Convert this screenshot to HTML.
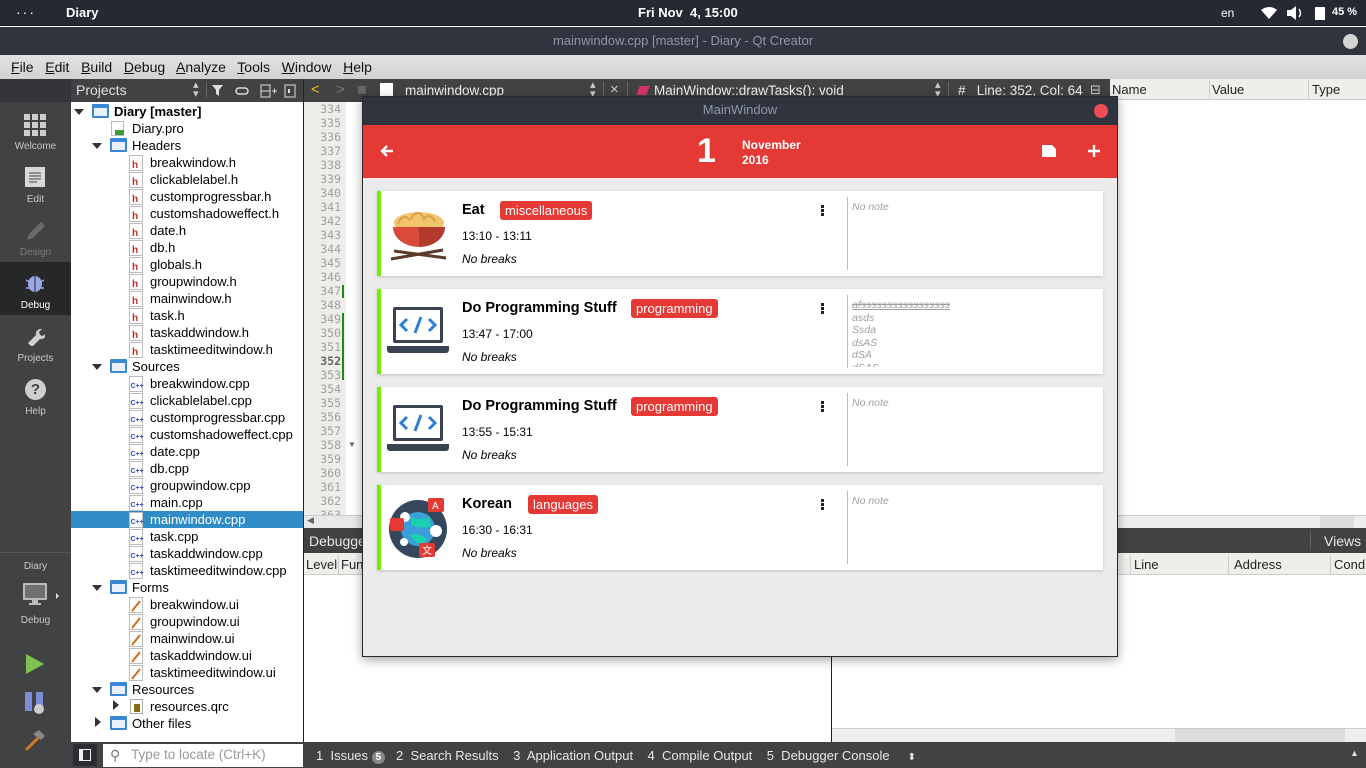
<!DOCTYPE html>
<html><head><meta charset="utf-8"><style>
*{margin:0;padding:0;box-sizing:border-box}
body{width:1366px;height:768px;overflow:hidden;position:relative;background:#fff;font-family:"Liberation Sans","DejaVu Sans",sans-serif;font-size:13px;color:#000}
.a{position:absolute}
.tr{position:absolute;height:17px;line-height:17px;font-size:13px;white-space:nowrap}
.ic{position:absolute;width:13px;height:15px;border:1px solid #aaa;background:#fff;top:1px}
.fold{position:absolute;width:17px;height:14px;top:2px;background:#3a87d6;border-radius:1px}
.fold:after{content:"";position:absolute;left:2px;top:4px;right:2px;bottom:2px;background:#e8f1fb}
.arr{position:absolute;width:0;height:0;border-left:5px solid transparent;border-right:5px solid transparent;border-top:6px solid #333;top:6px}
.arrr{position:absolute;width:0;height:0;border-top:5px solid transparent;border-bottom:5px solid transparent;border-left:6px solid #333;top:4px}
.ln{position:absolute;left:303px;width:38px;text-align:right;font-family:"DejaVu Sans Mono",monospace;font-size:11.5px;color:#a0a0a0;height:14px;line-height:14px}
.mode{position:absolute;left:0;width:71px;text-align:center;color:#c8c8c8;font-size:10px}
.card{position:absolute;left:377px;width:726px;height:85px;background:#fff;border-left:4px solid #70f000;box-shadow:0 1px 3px rgba(0,0,0,.18)}
.card .t{position:absolute;left:81px;top:11px;font-weight:bold;font-size:14.5px}
.card .tag{position:absolute;top:10px;background:#e53935;color:#fff;font-size:13px;padding:1px 5px;border-radius:3px;line-height:17px}
.card .tm{position:absolute;left:81px;top:38px;font-size:12px}
.card .nb{position:absolute;left:81px;top:61px;font-size:12px;font-style:italic}
.card .dots{position:absolute;left:440px;top:14px;width:3px}
.card .dots i{display:block;width:3px;height:2.5px;background:#222;margin-bottom:1.5px}
.card .sep{position:absolute;left:466px;top:6px;width:1px;height:73px;background:#bbb}
.card .note{position:absolute;left:471px;top:10px;font-size:10.5px;font-style:italic;color:#a0a0a0;line-height:12.5px}
.hdr{position:absolute;font-size:13px;color:#222;height:21px;line-height:21px}
</style></head><body>

<div class="a" style="left:0;top:0;width:1366px;height:26px;background:#252932;border-bottom:1px solid #1b1e24"></div>
<div class="a" style="left:16px;top:4px;color:#fff;font-size:14px;letter-spacing:2px">···</div>
<div class="a" style="left:66px;top:5px;color:#fff;font-size:13px;font-weight:bold">Diary</div>
<div class="a" style="left:638px;top:5px;color:#fff;font-size:13px;font-weight:bold">Fri Nov&nbsp; 4, 15:00</div>
<div class="a" style="left:1221px;top:6px;color:#fff;font-size:12px">en</div>
<svg class="a" style="left:1260px;top:6px" width="18" height="14"><path d="M1 4 Q9 -2 17 4 L9 13Z" fill="#fff"/></svg>
<svg class="a" style="left:1286px;top:5px" width="18" height="16"><path d="M1 5h4l5-4v14l-5-4H1z" fill="#fff"/><path d="M13 4q3 4 0 8" stroke="#fff" fill="none" stroke-width="1.4"/></svg>
<div class="a" style="left:1315px;top:7px;width:10px;height:13px;background:#fff"></div>
<div class="a" style="left:1332px;top:6px;color:#fff;font-size:11px;font-weight:bold">45 %</div>

<div class="a" style="left:0;top:27px;width:1366px;height:28px;background:#2f343f"></div>
<div class="a" style="left:0;top:33px;width:1366px;text-align:center;color:#8f97a6;font-size:13px">mainwindow.cpp [master] - Diary - Qt Creator</div>
<div class="a" style="left:1343px;top:34px;width:15px;height:15px;border-radius:50%;background:#d3d3d3"></div>

<div class="a" style="left:0;top:55px;width:1366px;height:24px;background:linear-gradient(#e2e2e2,#d2d2d2)"></div>
<div class="a" style="left:11px;top:59px;font-size:14px;color:#111"><u>F</u>ile&nbsp;&nbsp; <u>E</u>dit&nbsp;&nbsp; <u>B</u>uild&nbsp;&nbsp; <u>D</u>ebug&nbsp;&nbsp; <u>A</u>nalyze&nbsp;&nbsp; <u>T</u>ools&nbsp;&nbsp; <u>W</u>indow&nbsp;&nbsp; <u>H</u>elp</div>

<div class="a" style="left:0;top:79px;width:71px;height:689px;background:#404244"></div>
<div class="a" style="left:0;top:79px;width:71px;height:23px;background:#333538"></div>
<div class="a" style="left:0;top:262px;width:71px;height:53px;background:#262729"></div>
<div class="a" style="left:0;top:552px;width:71px;height:1px;background:#555"></div>
<svg class="a" style="left:24px;top:114px" width="22" height="22" fill="#cfcfcf"><rect x="0" y="0" width="6" height="6"/><rect x="8" y="0" width="6" height="6"/><rect x="16" y="0" width="6" height="6"/><rect x="0" y="8" width="6" height="6"/><rect x="8" y="8" width="6" height="6"/><rect x="16" y="8" width="6" height="6"/><rect x="0" y="16" width="6" height="6"/><rect x="8" y="16" width="6" height="6"/><rect x="16" y="16" width="6" height="6"/></svg>
<div class="mode" style="top:141px">Welcome</div>
<svg class="a" style="left:25px;top:167px" width="20" height="20"><rect width="20" height="20" fill="#d8d8d8"/><path d="M4 6h12M4 9h12M4 12h12M4 15h8" stroke="#444"/></svg>
<div class="mode" style="top:194px">Edit</div>
<svg class="a" style="left:24px;top:221px" width="22" height="22"><path d="M3 19l2-6 12-12 4 4-12 12z" fill="#6a6a6a"/></svg>
<div class="mode" style="top:247px;color:#7a7a7a">Design</div>
<svg class="a" style="left:24px;top:272px" width="22" height="22"><ellipse cx="11" cy="12" rx="7" ry="8" fill="#9aa6e6"/><path d="M2 8l5 3M20 8l-5 3M2 16h5M20 16h-5M11 5v15" stroke="#9aa6e6" stroke-width="1.5"/><path d="M11 4v16" stroke="#262729"/></svg>
<div class="mode" style="top:300px;color:#fff">Debug</div>
<svg class="a" style="left:25px;top:326px" width="20" height="20"><path d="M3 17l8-8a5 5 0 0 1 6-6l-3 3 1 3 3 1 3-3a5 5 0 0 1-6 6l-8 8z" fill="#cfcfcf"/></svg>
<div class="mode" style="top:353px">Projects</div>
<div class="a" style="left:25px;top:379px;width:21px;height:21px;border-radius:50%;background:#cfcfcf;color:#404244;font-weight:bold;font-size:15px;text-align:center;line-height:21px">?</div>
<div class="mode" style="top:406px">Help</div>
<div class="mode" style="top:561px">Diary</div>
<svg class="a" style="left:22px;top:582px" width="40" height="26"><rect x="1" y="1" width="24" height="17" rx="1" fill="#bbb"/><rect x="3" y="3" width="20" height="13" fill="#707070"/><rect x="10" y="18" width="6" height="3" fill="#bbb"/><rect x="7" y="21" width="12" height="2" fill="#bbb"/><path d="M34 11l3 3-3 3z" fill="#ddd"/></svg>
<div class="mode" style="top:615px">Debug</div>
<svg class="a" style="left:25px;top:653px" width="20" height="22"><path d="M1 1l18 10-18 10z" fill="#7fc14e"/></svg>
<svg class="a" style="left:25px;top:692px" width="22" height="24"><rect x="0" y="0" width="7" height="19" fill="#7c8cd6"/><rect x="11" y="0" width="7" height="19" fill="#7c8cd6"/><ellipse cx="14" cy="17" rx="5" ry="5" fill="#ccc"/></svg>
<svg class="a" style="left:23px;top:728px" width="24" height="24"><path d="M3 22l12-12" stroke="#d2781e" stroke-width="3"/><path d="M10 6l6-4 6 6-4 4z" fill="#888"/></svg>

<div class="a" style="left:71px;top:79px;width:232px;height:23px;background:#404244"></div>
<div class="a" style="left:76px;top:82px;color:#e0e0e0;font-size:14px">Projects</div>
<div class="a" style="left:193px;top:81px;color:#ccc;font-size:11px;line-height:9px">▴<br>▾</div>
<div class="a" style="left:206px;top:82px;width:1px;height:16px;background:#666"></div>
<svg class="a" style="left:212px;top:84px" width="90" height="14"><path d="M0 1h11l-4 5v6l-3-2V6z" fill="#ddd"/><rect x="24" y="4" width="12" height="6" rx="3" fill="none" stroke="#ddd" stroke-width="1.5"/><rect x="49" y="1" width="9" height="12" fill="none" stroke="#ddd"/><path d="M49 7h9M60 7h5M62.5 4.5v5" stroke="#ddd"/><rect x="73" y="1" width="10" height="12" fill="none" stroke="#ddd"/><rect x="76" y="5" width="2" height="4" fill="#ddd"/></svg>
<div class="a" style="left:71px;top:102px;width:232px;height:640px;background:#fff"></div>
<div class="a" style="left:303px;top:79px;width:1px;height:663px;background:#222"></div>
<div class="a" style="left:71px;top:511px;width:232px;height:17px;background:#308cc6"></div>

<div class="arr" style="left:74px;top:109px"></div><div class="fold" style="left:92px;top:104px"></div><div class="tr" style="left:114px;top:103px;font-weight:bold">Diary [master]</div>
<div class="ic" style="left:111px;top:121px;border-color:#bbb"></div><div class="a" style="left:115px;top:130px;width:9px;height:5px;background:#3a9a3a"></div><div class="tr" style="left:132px;top:120px">Diary.pro</div>
<div class="arr" style="left:92px;top:143px"></div><div class="fold" style="left:110px;top:138px"></div><div class="tr" style="left:132px;top:137px">Headers</div>
<div class="tr" style="left:150px;top:154px">breakwindow.h</div>
<div class="tr" style="left:150px;top:171px">clickablelabel.h</div>
<div class="tr" style="left:150px;top:188px">customprogressbar.h</div>
<div class="tr" style="left:150px;top:205px">customshadoweffect.h</div>
<div class="tr" style="left:150px;top:222px">date.h</div>
<div class="tr" style="left:150px;top:239px">db.h</div>
<div class="tr" style="left:150px;top:256px">globals.h</div>
<div class="tr" style="left:150px;top:273px">groupwindow.h</div>
<div class="tr" style="left:150px;top:290px">mainwindow.h</div>
<div class="tr" style="left:150px;top:307px">task.h</div>
<div class="tr" style="left:150px;top:324px">taskaddwindow.h</div>
<div class="tr" style="left:150px;top:341px">tasktimeeditwindow.h</div>
<div class="arr" style="left:92px;top:364px"></div><div class="fold" style="left:110px;top:359px"></div><div class="tr" style="left:132px;top:358px">Sources</div>
<div class="tr" style="left:150px;top:375px">breakwindow.cpp</div>
<div class="tr" style="left:150px;top:392px">clickablelabel.cpp</div>
<div class="tr" style="left:150px;top:409px">customprogressbar.cpp</div>
<div class="tr" style="left:150px;top:426px">customshadoweffect.cpp</div>
<div class="tr" style="left:150px;top:443px">date.cpp</div>
<div class="tr" style="left:150px;top:460px">db.cpp</div>
<div class="tr" style="left:150px;top:477px">groupwindow.cpp</div>
<div class="tr" style="left:150px;top:494px">main.cpp</div>
<div class="tr" style="left:150px;top:511px;color:#fff">mainwindow.cpp</div>
<div class="tr" style="left:150px;top:528px">task.cpp</div>
<div class="tr" style="left:150px;top:545px">taskaddwindow.cpp</div>
<div class="tr" style="left:150px;top:562px">tasktimeeditwindow.cpp</div>
<div class="arr" style="left:92px;top:585px"></div><div class="fold" style="left:110px;top:580px"></div><div class="tr" style="left:132px;top:579px">Forms</div>
<div class="tr" style="left:150px;top:596px">breakwindow.ui</div>
<div class="tr" style="left:150px;top:613px">groupwindow.ui</div>
<div class="tr" style="left:150px;top:630px">mainwindow.ui</div>
<div class="tr" style="left:150px;top:647px">taskaddwindow.ui</div>
<div class="tr" style="left:150px;top:664px">tasktimeeditwindow.ui</div>
<div class="arr" style="left:92px;top:687px"></div><div class="fold" style="left:110px;top:682px"></div><div class="tr" style="left:132px;top:681px">Resources</div>
<div class="arrr" style="left:113px;top:700px"></div><div class="ic" style="left:130px;top:699px"></div><div class="a" style="left:134px;top:704px;width:6px;height:8px;background:#8a6a10"></div><div class="tr" style="left:150px;top:698px">resources.qrc</div>
<div class="arrr" style="left:95px;top:717px"></div><div class="fold" style="left:110px;top:716px"></div><div class="tr" style="left:132px;top:715px">Other files</div>

<svg class="a" style="left:129px;top:154px" width="15" height="600">
<g font-family="Liberation Sans" font-weight="bold" font-size="10">
<g id="h"><rect x="0.5" y="1.5" width="13" height="15" fill="#fff" stroke="#bbb"/><text x="3" y="14" fill="#c0302a">h</text></g>
<use href="#h" y="17"/><use href="#h" y="34"/><use href="#h" y="51"/><use href="#h" y="68"/><use href="#h" y="85"/><use href="#h" y="102"/><use href="#h" y="119"/><use href="#h" y="136"/><use href="#h" y="153"/><use href="#h" y="170"/><use href="#h" y="187"/>
<g id="c" transform="translate(0,221)"><rect x="0.5" y="1.5" width="13" height="15" fill="#fff" stroke="#bbb"/><text x="1.5" y="13" fill="#3050c0" font-size="7">C++</text></g>
<use href="#c" y="17"/><use href="#c" y="34"/><use href="#c" y="51"/><use href="#c" y="68"/><use href="#c" y="85"/><use href="#c" y="102"/><use href="#c" y="119"/><use href="#c" y="136"/><use href="#c" y="153"/><use href="#c" y="170"/><use href="#c" y="187"/>
<g id="u" transform="translate(0,442)"><rect x="0.5" y="1.5" width="13" height="15" fill="#fff" stroke="#bbb"/><path d="M3 15l8-10" stroke="#d07018" stroke-width="2"/></g>
<use href="#u" y="17"/><use href="#u" y="34"/><use href="#u" y="51"/><use href="#u" y="68"/>
</g></svg>

<div class="a" style="left:304px;top:79px;width:806px;height:23px;background:#404244"></div>
<div class="a" style="left:311px;top:81px;color:#e8b51e;font-size:15px">&lt;</div>
<div class="a" style="left:336px;top:81px;color:#777;font-size:15px">&gt;</div>
<div class="a" style="left:358px;top:86px;width:8px;height:8px;background:#666"></div>
<div class="a" style="left:380px;top:83px;width:13px;height:15px;background:#fff"></div>
<div class="a" style="left:405px;top:83px;color:#eee;font-size:13.5px">mainwindow.cpp</div>
<div class="a" style="left:590px;top:81px;color:#ccc;font-size:11px;line-height:9px">▴<br>▾</div>
<div class="a" style="left:603px;top:82px;width:1px;height:16px;background:#666"></div>
<div class="a" style="left:610px;top:81px;color:#ccc;font-size:15px">×</div>
<div class="a" style="left:627px;top:82px;width:1px;height:16px;background:#666"></div>
<div class="a" style="left:638px;top:86px;width:10px;height:9px;background:#d6336c;transform:skewX(-20deg)"></div>
<div class="a" style="left:654px;top:83px;color:#eee;font-size:13.5px">MainWindow::drawTasks(): void</div>
<div class="a" style="left:935px;top:81px;color:#ccc;font-size:11px;line-height:9px">▴<br>▾</div>
<div class="a" style="left:948px;top:82px;width:1px;height:16px;background:#666"></div>
<div class="a" style="left:958px;top:83px;color:#eee;font-size:13.5px">#&nbsp;&nbsp; Line: 352, Col: 64</div>
<div class="a" style="left:1090px;top:82px;color:#ccc;font-size:13px">⊟</div>

<div class="a" style="left:304px;top:102px;width:42px;height:413px;background:#efedea"></div>
<div class="ln" style="top:102px">334</div><div class="ln" style="top:116px">335</div><div class="ln" style="top:130px">336</div><div class="ln" style="top:144px">337</div><div class="ln" style="top:158px">338</div><div class="ln" style="top:172px">339</div><div class="ln" style="top:186px">340</div><div class="ln" style="top:200px">341</div><div class="ln" style="top:214px">342</div><div class="ln" style="top:228px">343</div><div class="ln" style="top:242px">344</div><div class="ln" style="top:256px">345</div><div class="ln" style="top:270px">346</div><div class="ln" style="top:284px">347</div><div class="ln" style="top:298px">348</div><div class="ln" style="top:312px">349</div><div class="ln" style="top:326px">350</div><div class="ln" style="top:340px">351</div><div class="ln" style="top:354px;color:#666;font-weight:bold">352</div><div class="ln" style="top:368px">353</div><div class="ln" style="top:382px">354</div><div class="ln" style="top:396px">355</div><div class="ln" style="top:410px">356</div><div class="ln" style="top:424px">357</div><div class="ln" style="top:438px">358</div><div class="ln" style="top:452px">359</div><div class="ln" style="top:466px">360</div><div class="ln" style="top:480px">361</div><div class="ln" style="top:494px">362</div><div class="ln" style="top:508px;height:7px;overflow:hidden">363</div>
<div class="a" style="left:342px;top:285px;width:2px;height:13px;background:#1a8a1a"></div>
<div class="a" style="left:342px;top:313px;width:2px;height:67px;background:#1a8a1a"></div>
<div class="a" style="left:348px;top:440px;color:#666;font-size:8px">▼</div>
<div class="a" style="left:304px;top:515px;width:58px;height:13px;background:#e8e8e8;border-top:1px solid #ccc"></div>
<div class="a" style="left:307px;top:515px;color:#666;font-size:9px">◀</div>

<div class="a" style="left:1110px;top:79px;width:256px;height:21px;background:#f0eeeb;border-bottom:1px solid #ccc"></div>
<div class="hdr" style="left:1112px;top:79px">Name</div>
<div class="a" style="left:1209px;top:80px;width:1px;height:20px;background:#ccc"></div>
<div class="hdr" style="left:1212px;top:79px">Value</div>
<div class="a" style="left:1308px;top:80px;width:1px;height:20px;background:#ccc"></div>
<div class="hdr" style="left:1312px;top:79px">Type</div>
<div class="a" style="left:1110px;top:515px;width:256px;height:13px;background:#eee;border-top:1px solid #ccc"></div>
<div class="a" style="left:1320px;top:516px;width:34px;height:12px;background:#ddd"></div>

<div class="a" style="left:304px;top:528px;width:1062px;height:25px;background:#404244"></div>
<div class="a" style="left:309px;top:533px;color:#e8e8e8;font-size:14px">Debugger</div>
<div class="a" style="left:1310px;top:531px;width:1px;height:18px;background:#666"></div>
<div class="a" style="left:1324px;top:533px;color:#e8e8e8;font-size:14px">Views</div>
<div class="a" style="left:304px;top:553px;width:1062px;height:22px;background:#f0eeeb;border-bottom:1px solid #ccc"></div>
<div class="hdr" style="left:306px;top:554px">Level</div>
<div class="a" style="left:338px;top:555px;width:1px;height:19px;background:#ccc"></div>
<div class="hdr" style="left:341px;top:554px">Function</div>
<div class="a" style="left:1130px;top:555px;width:1px;height:19px;background:#ccc"></div>
<div class="hdr" style="left:1134px;top:554px">Line</div>
<div class="a" style="left:1228px;top:555px;width:1px;height:19px;background:#ccc"></div>
<div class="hdr" style="left:1234px;top:554px">Address</div>
<div class="a" style="left:1330px;top:555px;width:1px;height:19px;background:#ccc"></div>
<div class="hdr" style="left:1334px;top:554px">Condi</div>
<div class="a" style="left:831px;top:575px;width:1px;height:167px;background:#222"></div>
<div class="a" style="left:832px;top:728px;width:534px;height:14px;background:#eee;border-top:1px solid #ccc"></div>
<div class="a" style="left:1175px;top:729px;width:170px;height:13px;background:#ddd"></div>

<div class="a" style="left:71px;top:742px;width:1295px;height:26px;background:#404244"></div>
<div class="a" style="left:73px;top:744px;width:24px;height:22px;background:#2c2d30"></div>
<div class="a" style="left:79px;top:749px;width:12px;height:12px;border:1.5px solid #eee;border-left-width:4px"></div>
<div class="a" style="left:103px;top:744px;width:200px;height:23px;background:#fff"></div>
<div class="a" style="left:110px;top:747px;color:#777;font-size:14px">⚲</div>
<div class="a" style="left:131px;top:747px;color:#999;font-size:13.5px">Type to locate (Ctrl+K)</div>
<div class="a" style="left:316px;top:748px;color:#e8e8e8;font-size:13px;white-space:nowrap">1&nbsp; Issues <span style="display:inline-block;background:#888;color:#fff;border-radius:7px;font-size:10px;font-weight:bold;padding:0 4px;line-height:13px">5</span>&nbsp;&nbsp; 2&nbsp; Search Results&nbsp;&nbsp;&nbsp; 3&nbsp; Application Output&nbsp;&nbsp;&nbsp; 4&nbsp; Compile Output&nbsp;&nbsp;&nbsp; 5&nbsp; Debugger Console&nbsp;&nbsp;&nbsp;&nbsp; <span style="font-size:10px">⬍</span></div>
<div class="a" style="left:1350px;top:748px;color:#ddd;font-size:9px">▲</div>

<div class="a" style="left:362px;top:96px;width:756px;height:561px;background:#ebebeb;border:1px solid #2a2a2a;box-shadow:0 3px 10px rgba(0,0,0,.35)"></div>
<div class="a" style="left:363px;top:97px;width:754px;height:28px;background:#2f343f"></div>
<div class="a" style="left:363px;top:102px;width:754px;text-align:center;color:#8f97a6;font-size:13px">MainWindow</div>
<div class="a" style="left:1094px;top:104px;width:14px;height:14px;border-radius:50%;background:#ef4b55"></div>
<div class="a" style="left:363px;top:125px;width:754px;height:53px;background:#e53935"></div>
<svg class="a" style="left:380px;top:144px" width="14" height="14"><path d="M13 7H3M7 2L2 7l5 5" stroke="#fff" stroke-width="2.4" fill="none"/></svg>
<div class="a" style="left:697px;top:131px;color:#fff;font-size:34px;font-weight:bold;line-height:40px">1</div>
<div class="a" style="left:742px;top:138px;color:#fff;font-size:12px;font-weight:bold;line-height:15px">November<br>2016</div>
<svg class="a" style="left:1042px;top:145px" width="14" height="12"><path d="M0 0h10l4 4v8H0z" fill="#fff"/></svg>
<svg class="a" style="left:1088px;top:145px" width="12" height="12"><path d="M6 0v12M0 6h12" stroke="#fff" stroke-width="2.4"/></svg>

<div class="card" style="top:191px">
<svg class="a" style="left:8px;top:12px" width="60" height="60"><ellipse cx="30" cy="20" rx="25" ry="11" fill="#f2c46b"/><path d="M9 21c3-8 8-10 12-3M22 16c4-8 10-8 13 0M34 17c4-6 9-5 12 2" stroke="#d9a24a" fill="none" stroke-width="2"/><path d="M4 24h52a26 20 0 0 1-52 0z" fill="#d84a3a"/><path d="M30 24h26a26 20 0 0 1-26 20z" fill="#b33b2d"/><path d="M2 56l52-9M5 48l52 7" stroke="#5a3a2a" stroke-width="3"/></svg>
<div class="t">Eat</div><div class="tag" style="left:119px">miscellaneous</div>
<div class="tm">13:10 - 13:11</div><div class="nb">No breaks</div>
<div class="dots"><i></i><i></i><i></i></div><div class="sep"></div><div class="note">No note</div>
</div>
<div class="card" style="top:289px">
<svg class="a" style="left:6px;top:16px" width="62" height="52"><rect x="6" y="2" width="50" height="36" rx="2" fill="#3b4252"/><rect x="9" y="5" width="44" height="30" fill="#fff"/><path d="M0 41h62v4a3 3 0 0 1-3 3H3a3 3 0 0 1-3-3z" fill="#3b4252"/><path d="M20 14l-6 6 6 6M42 14l6 6-6 6M34 12l-6 16" stroke="#2f7fd0" stroke-width="3" fill="none"/></svg>
<div class="t">Do Programming Stuff</div><div class="tag" style="left:250px">programming</div>
<div class="tm">13:47 - 17:00</div><div class="nb">No breaks</div>
<div class="dots"><i></i><i></i><i></i></div><div class="sep"></div>
<div class="note" style="height:68px;overflow:hidden"><span style="text-decoration:line-through underline">afsssssssssssssssss</span><br>asds<br>Ssda<br>dsAS<br>dSA<br>dSAS</div>
</div>
<div class="card" style="top:387px">
<svg class="a" style="left:6px;top:16px" width="62" height="52"><rect x="6" y="2" width="50" height="36" rx="2" fill="#3b4252"/><rect x="9" y="5" width="44" height="30" fill="#fff"/><path d="M0 41h62v4a3 3 0 0 1-3 3H3a3 3 0 0 1-3-3z" fill="#3b4252"/><path d="M20 14l-6 6 6 6M42 14l6 6-6 6M34 12l-6 16" stroke="#2f7fd0" stroke-width="3" fill="none"/></svg>
<div class="t">Do Programming Stuff</div><div class="tag" style="left:250px">programming</div>
<div class="tm">13:55 - 15:31</div><div class="nb">No breaks</div>
<div class="dots"><i></i><i></i><i></i></div><div class="sep"></div><div class="note">No note</div>
</div>
<div class="card" style="top:485px">
<svg class="a" style="left:6px;top:10px" width="64" height="66"><circle cx="31" cy="34" r="29" fill="#34475c"/><circle cx="31" cy="34" r="17" fill="#3a9fd8"/><path d="M24 22q8 4 18 0l2 10q-10 2-20-2zM22 40q10-3 18 4l-4 6q-8-2-14-10z" fill="#19d0b0"/><circle cx="18" cy="22" r="5" fill="#fff"/><circle cx="49" cy="36" r="6" fill="#fff"/><circle cx="17" cy="47" r="4" fill="#fff"/><rect x="41" y="3" width="16" height="14" rx="2" fill="#e53935"/><text x="45" y="14" font-size="10" fill="#fff" font-family="Liberation Sans">A</text><rect x="3" y="23" width="14" height="13" rx="2" fill="#e53935"/><rect x="32" y="48" width="16" height="14" rx="2" fill="#e53935"/><text x="35" y="59" font-size="10" fill="#fff" font-family="Noto Sans CJK SC,sans-serif">文</text></svg>
<div class="t">Korean</div><div class="tag" style="left:147px">languages</div>
<div class="tm">16:30 - 16:31</div><div class="nb">No breaks</div>
<div class="dots"><i></i><i></i><i></i></div><div class="sep"></div><div class="note">No note</div>
</div>

</body></html>
